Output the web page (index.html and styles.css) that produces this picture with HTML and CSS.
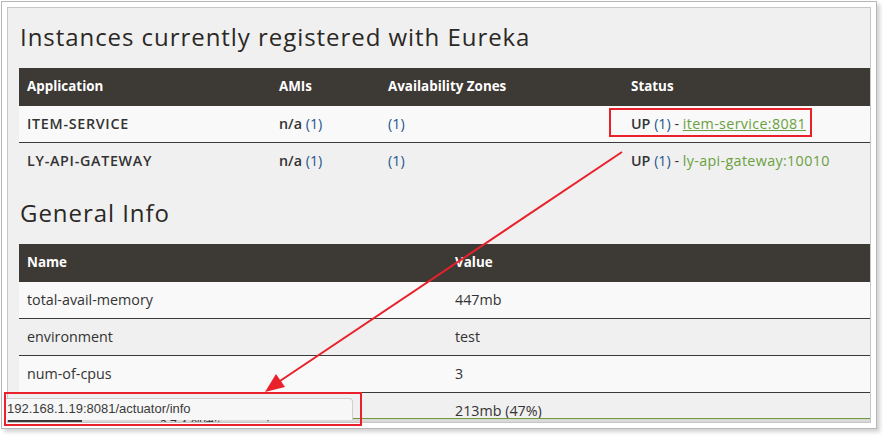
FILE: index.html
```html
<!DOCTYPE html>
<html>
<head>
<meta charset="utf-8">
<link rel="stylesheet" href="styles.css">
</head>
<body>
<div class="shot">
  <div class="frame">
    <div class="page">
      <h1 class="title">Instances currently registered with Eureka</h1>
      <table class="tbl apps">
        <colgroup><col class="c1"><col class="c2"><col class="c3"><col class="c4"></colgroup>
        <thead><tr><th>Application</th><th>AMIs</th><th>Availability Zones</th><th>Status</th></tr></thead>
        <tbody>
          <tr class="odd"><td class="strong">ITEM-SERVICE</td><td><b>n/a</b> <span class="cnt">(1)</span></td><td><span class="cnt">(1)</span></td><td><b>UP</b> <span class="cnt">(1)</span> - <a class="lnk hover">item-service:8081</a></td></tr>
          <tr><td class="strong">LY-API-GATEWAY</td><td><b>n/a</b> <span class="cnt">(1)</span></td><td><span class="cnt">(1)</span></td><td><b>UP</b> <span class="cnt">(1)</span> - <a class="lnk">ly-api-gateway:10010</a></td></tr>
        </tbody>
      </table>
      <h1 class="title second">General Info</h1>
      <table class="tbl info">
        <colgroup><col class="n1"><col class="n2"></colgroup>
        <thead><tr><th>Name</th><th>Value</th></tr></thead>
        <tbody>
          <tr class="odd"><td>total-avail-memory</td><td>447mb</td></tr>
          <tr><td>environment</td><td>test</td></tr>
          <tr class="odd"><td>num-of-cpus</td><td>3</td></tr>
          <tr><td></td><td>213mb (47%)</td></tr>
        </tbody>
      </table>
      <div class="taskbar"><span class="dark"></span><span class="tb-text">2.7.4 创建item-service</span></div>
    </div>
  </div>
  <div class="statusbar">192.168.1.19:8081/actuator/info</div>
  <div class="mark mark-status"></div>
  <div class="mark mark-url"></div>
  <svg class="arrow" width="883" height="436" viewBox="0 0 883 436">
    <line x1="622" y1="151" x2="274" y2="384" stroke="#e8212b" stroke-width="2"/>
    <polygon points="265,391 276,373 285,386" fill="#e8212b"/>
  </svg>
</div>
</body>
</html>
```

FILE: styles.css
```css
html, body {
  margin: 0;
  padding: 0;
  background: #ffffff;
}
body {
  width: 883px;
  height: 436px;
  overflow: hidden;
  font-family: "Open Sans", "Noto Sans CJK SC", sans-serif;
  color: #333333;
}
.shot {
  position: relative;
  width: 883px;
  height: 436px;
}
.frame {
  margin: 1px 0 0 1px;
  width: 864px;
  height: 416px;
  border: 1px solid #b7b7b7;
  padding: 5px;
  background: #ffffff;
  box-shadow: 3px 3px 4px rgba(0, 0, 0, 0.18);
}
.page {
  box-sizing: border-box;
  width: 864px;
  height: 416px;
  margin: 0;
  border: 1px solid #c6c6c6;
  background: #f0f0f0;
  padding: 14px 0 0 11px;
  overflow: hidden;
  position: relative;
  display: flex;
  flex-direction: column;
}
.title {
  margin: 0 0 16px 1px;
  font-size: 24px;
  line-height: 30px;
  font-weight: 400;
  color: #2b2825;
  letter-spacing: 0.95px;
}
.title.second {
  margin-top: 19px;
}
.tbl {
  border-collapse: collapse;
  width: 851px;
  table-layout: fixed;
  font-size: 14.3px;
}
.apps .c1 { width: 252px; }
.apps .c2 { width: 109px; }
.apps .c3 { width: 243px; }
.apps .c4 { width: 247px; }
.info .n1 { width: 428px; }
.info .n2 { width: 423px; }
.tbl th {
  background: #3d3935;
  color: #ffffff;
  text-align: left;
  font-weight: 700;
  font-size: 13.4px;
  height: 37px;
  padding: 0 8px;
  box-sizing: border-box;
}
.tbl td {
  height: 37px;
  box-sizing: border-box;
  padding: 0 8px;
  border-top: 1px solid #3a3a3a;
  vertical-align: middle;
  white-space: nowrap;
}
.tbl tr.odd td {
  background: #f9f9f9;
}
.tbl tbody tr:first-child td {
  border-top-color: #3d3935;
}
.strong, .tbl b {
  font-weight: 600;
}
.strong {
  letter-spacing: 0.7px;
}
.cnt {
  color: #22558e;
}
.lnk {
  color: #6aa040;
  text-decoration: none;
  letter-spacing: 0.35px;
}
.lnk.hover {
  text-decoration: underline;
}
.taskbar {
  position: absolute;
  left: 0;
  right: 0;
  bottom: 0;
  height: 3px;
  border-top: 1px solid #6f9a3c;
  background: #d9d9d9;
  display: flex;
  overflow: hidden;
  font-size: 12px;
  line-height: 12px;
}
.taskbar .dark {
  width: 74px;
  background: #3a3a3a;
  margin-top: -1px;
}
.taskbar .tb-text {
  margin-left: 78px;
  color: #333333;
}
.statusbar {
  position: absolute;
  left: 5px;
  top: 397px;
  width: 348px;
  height: 22px;
  box-sizing: border-box;
  background: #f7f7f7;
  border: 1px solid #cfcfcf;
  border-left: none;
  border-bottom: none;
  border-top-right-radius: 4px;
  font-family: "Liberation Sans", sans-serif;
  font-size: 13px;
  line-height: 20px;
  padding-left: 2px;
  color: #3b3b3b;
}
.mark {
  position: absolute;
  border: 2px solid #e8212b;
  box-sizing: border-box;
}
.mark-status {
  left: 609px;
  top: 107px;
  width: 203px;
  height: 29px;
}
.mark-url {
  left: 4px;
  top: 391px;
  width: 358px;
  height: 34px;
}
.arrow {
  position: absolute;
  left: 0;
  top: 0;
  pointer-events: none;
}
```
